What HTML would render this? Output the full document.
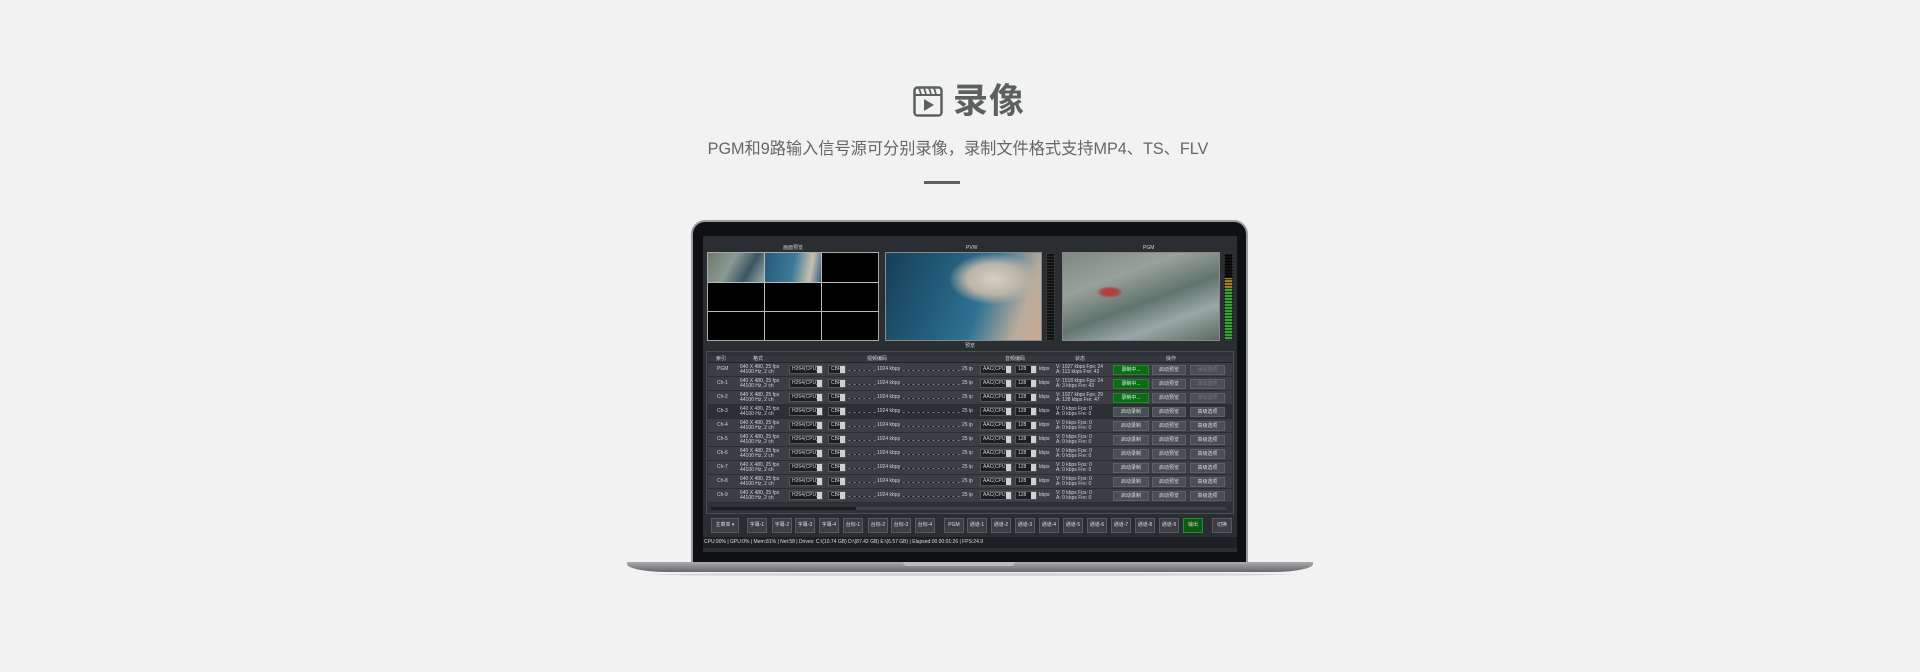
<!DOCTYPE html>
<html><head><meta charset="utf-8">
<style>
*{margin:0;padding:0;box-sizing:border-box}
body{width:1920px;height:672px;background:#f2f2f2;position:relative;overflow:hidden;font-family:"Liberation Sans","Noto Sans CJK SC",sans-serif}
.a{position:absolute}
.t{font-size:5px;color:#cfd3d6;white-space:nowrap;line-height:5px}
.row{position:absolute;left:708px;width:524px;height:14px;background:#3b3f44;border-bottom:1px solid #2a2d31}
.row > *{position:absolute}
.sel{height:9px;top:2px;background:#1c1f22;border:1px solid #555}
.sel i{position:absolute;right:0;top:0;width:5px;height:7px;background:#cfd2d5}
.sld{height:1px;top:7px;background:#1a1a1a;border-top:1px dashed #666}
.btn{top:2px;height:10px;background:#4a4f55;border:1px solid #5c6168;font-size:5px;color:#ddd;text-align:center;line-height:8px}
.g{background:#0e6a14;border-color:#1d8a24;color:#cfe}
.dim{color:#777}
.bb{position:absolute;top:518px;height:15px;width:20px;background:#3b3f44;border:1px solid #565b61;font-size:5px;color:#ddd;text-align:center;line-height:13px}
</style></head><body>

<svg class="a" style="left:913px;top:86px" width="30" height="31" viewBox="0 0 30 31">
<rect x="1.5" y="1.5" width="27" height="28" rx="3" fill="none" stroke="#5b6161" stroke-width="2.5"/>
<line x1="1.5" y1="9" x2="28.5" y2="9" stroke="#5b6161" stroke-width="2"/>
<path d="M6 2L8 8M11 2L13 8M16 2L18 8M21 2L23 8" stroke="#5b6161" stroke-width="1.8"/>
<path d="M11 13L21 19L11 25Z" fill="#5b6161"/>
</svg>
<div class="a" style="left:953px;top:80px;font-size:35px;font-weight:bold;color:#5b6161;line-height:44px;letter-spacing:1px">录像</div>
<div class="a" style="left:658px;top:139px;width:600px;text-align:center;font-size:16.2px;color:#666;line-height:21px;white-space:nowrap">PGM和9路输入信号源可分别录像，录制文件格式支持MP4、TS、FLV</div>
<div class="a" style="left:924px;top:181px;width:36px;height:3px;background:#5b6161"></div>

<div class="a" style="left:691px;top:220px;width:557px;height:344px;background:#0f1012;border-radius:14px 14px 0 0;border:2px solid #9a9ca0;border-bottom:none"></div>
<div class="a" style="left:627px;top:562px;width:686px;height:10px;background:linear-gradient(#a9abae,#808286 60%,#67696c);border-radius:0 0 40px 40px/0 0 8px 8px"></div>
<div class="a" style="left:903px;top:562px;width:112px;height:4px;background:#b9bbbe;border-radius:0 0 4px 4px"></div>
<div class="a" style="left:650px;top:573px;width:640px;height:3px;background:rgba(0,0,0,.12);border-radius:50%"></div>

<div class="a" style="left:703px;top:236px;width:534px;height:316px;background:#2a2d31"></div>
<div class="a t" style="left:783px;top:246px;font-size:5px">画面预览</div>
<div class="a t" style="left:966px;top:246px">PVW</div>
<div class="a t" style="left:1143px;top:246px">PGM</div>

<div class="a" style="left:707px;top:252px;width:172px;height:89px;background:#000;border:1px solid #aaa"></div>
<div class="a" style="left:708px;top:253px;width:56px;height:29px;background:linear-gradient(120deg,#6a7a6a,#8a9a94 40%,#3b5560 70%,#9aa)"></div>
<div class="a" style="left:765px;top:253px;width:56px;height:29px;background:linear-gradient(100deg,#2a5a78,#3b7a96 50%,#c8c0b0 80%,#2d6080)"></div>
<div class="a" style="left:708px;top:282px;width:170px;height:1px;background:#bbb"></div>
<div class="a" style="left:708px;top:311px;width:170px;height:1px;background:#bbb"></div>
<div class="a" style="left:764px;top:253px;width:1px;height:87px;background:#bbb"></div>
<div class="a" style="left:821px;top:253px;width:1px;height:87px;background:#bbb"></div>

<div class="a" style="left:885px;top:252px;width:157px;height:89px;background:radial-gradient(ellipse at 70% 30%,#d8cfc4 0,#b9b3a8 18%,transparent 30%),linear-gradient(110deg,#173f58,#24607e 40%,#2f7293 60%,#b9ac9c 85%,#caa890);border:1px solid #888"></div>
<div class="a" style="left:1046px;top:253px;width:9px;height:88px;background:repeating-linear-gradient(#111 0 2px,#2a2a2a 2px 3px);border:1px solid #333"></div>
<div class="a" style="left:1062px;top:252px;width:158px;height:89px;background:radial-gradient(ellipse at 30% 45%,#c33 0,#a44 5%,transparent 9%),linear-gradient(160deg,#7b8a82,#98a29a 30%,#61746e 55%,#9aa7a8 75%,#5c6a5e);border:1px solid #888"></div>
<div class="a" style="left:1224px;top:253px;width:9px;height:88px;background:linear-gradient(#111 0 28%,#a07d2a 28% 40%,#3aa238 40% 100%);border:1px solid #333"></div>
<div class="a" style="left:1224px;top:253px;width:9px;height:88px;background:repeating-linear-gradient(transparent 0 2px,rgba(0,0,0,.6) 2px 3px)"></div>

<div class="a t" style="left:965px;top:344px">预览</div>

<div class="a" style="left:706px;top:351px;width:528px;height:163px;background:#2e3135;border:1px solid #4a4e53"></div>
<div class="a" style="left:708px;top:356px;width:524px;height:7px;background:#34383c;border-bottom:1px solid #222"></div>
<div class="a t" style="left:716px;top:357px">索引</div>
<div class="a t" style="left:753px;top:357px">格式</div>
<div class="a t" style="left:867px;top:357px">视频编码</div>
<div class="a t" style="left:1005px;top:357px">音频编码</div>
<div class="a t" style="left:1075px;top:357px">状态</div>
<div class="a t" style="left:1166px;top:357px">操作</div>

<div class="row" style="top:363px"><span class="t" style="left:9px;top:4px">PGM</span><span class="t" style="left:32px;top:2px">640 X 480, 25 fps<br>44100 Hz, 2 ch</span><div class="sel" style="left:81px;width:34px"><span class="t" style="position:absolute;left:2px;top:1px">H264(CPU)</span><i></i></div><div class="sel" style="left:120px;width:18px"><span class="t" style="position:absolute;left:2px;top:1px">CBR</span><i></i></div><div class="sld" style="left:140px;width:28px"></div><span class="t" style="left:169px;top:4px">1024 kbps</span><div class="sld" style="left:189px;width:63px"></div><span class="t" style="left:254px;top:4px">25 ip</span><div class="sel" style="left:272px;width:32px"><span class="t" style="position:absolute;left:2px;top:1px">AAC(CPU)</span><i></i></div><div class="sel" style="left:307px;width:22px"><span class="t" style="position:absolute;left:2px;top:1px">128</span><i></i></div><span class="t" style="left:331px;top:4px">kbps</span><span class="t" style="left:348px;top:2px">V: 1027 kbps Fps: 24<br>A: 113 kbps Fre: 43</span><div class="btn g" style="left:405px;width:36px">录制中...</div><div class="btn" style="left:444px;width:34px">启动预览</div><div class="btn dim" style="left:482px;width:35px">添加选项</div></div>

<div class="row" style="top:377px"><span class="t" style="left:9px;top:4px">Ch-1</span><span class="t" style="left:32px;top:2px">640 X 480, 25 fps<br>44100 Hz, 2 ch</span><div class="sel" style="left:81px;width:34px"><span class="t" style="position:absolute;left:2px;top:1px">H264(CPU)</span><i></i></div><div class="sel" style="left:120px;width:18px"><span class="t" style="position:absolute;left:2px;top:1px">CBR</span><i></i></div><div class="sld" style="left:140px;width:28px"></div><span class="t" style="left:169px;top:4px">1024 kbps</span><div class="sld" style="left:189px;width:63px"></div><span class="t" style="left:254px;top:4px">25 ip</span><div class="sel" style="left:272px;width:32px"><span class="t" style="position:absolute;left:2px;top:1px">AAC(CPU)</span><i></i></div><div class="sel" style="left:307px;width:22px"><span class="t" style="position:absolute;left:2px;top:1px">128</span><i></i></div><span class="t" style="left:331px;top:4px">kbps</span><span class="t" style="left:348px;top:2px">V: 1518 kbps Fps: 24<br>A: 3 kbps Fre: 43</span><div class="btn g" style="left:405px;width:36px">录制中...</div><div class="btn" style="left:444px;width:34px">启动预览</div><div class="btn dim" style="left:482px;width:35px">添加选项</div></div>

<div class="row" style="top:391px"><span class="t" style="left:9px;top:4px">Ch-2</span><span class="t" style="left:32px;top:2px">640 X 480, 25 fps<br>44100 Hz, 2 ch</span><div class="sel" style="left:81px;width:34px"><span class="t" style="position:absolute;left:2px;top:1px">H264(CPU)</span><i></i></div><div class="sel" style="left:120px;width:18px"><span class="t" style="position:absolute;left:2px;top:1px">CBR</span><i></i></div><div class="sld" style="left:140px;width:28px"></div><span class="t" style="left:169px;top:4px">1024 kbps</span><div class="sld" style="left:189px;width:63px"></div><span class="t" style="left:254px;top:4px">25 ip</span><div class="sel" style="left:272px;width:32px"><span class="t" style="position:absolute;left:2px;top:1px">AAC(CPU)</span><i></i></div><div class="sel" style="left:307px;width:22px"><span class="t" style="position:absolute;left:2px;top:1px">128</span><i></i></div><span class="t" style="left:331px;top:4px">kbps</span><span class="t" style="left:348px;top:2px">V: 1027 kbps Fps: 29<br>A: 128 kbps Fre: 47</span><div class="btn g" style="left:405px;width:36px">录制中...</div><div class="btn" style="left:444px;width:34px">启动预览</div><div class="btn dim" style="left:482px;width:35px">添加选项</div></div>

<div class="row" style="top:405px;background:#2c2f33"><span class="t" style="left:9px;top:4px">Ch-3</span><span class="t" style="left:32px;top:2px">640 X 480, 25 fps<br>44100 Hz, 2 ch</span><div class="sel" style="left:81px;width:34px"><span class="t" style="position:absolute;left:2px;top:1px">H264(CPU)</span><i></i></div><div class="sel" style="left:120px;width:18px"><span class="t" style="position:absolute;left:2px;top:1px">CBR</span><i></i></div><div class="sld" style="left:140px;width:28px"></div><span class="t" style="left:169px;top:4px">1024 kbps</span><div class="sld" style="left:189px;width:63px"></div><span class="t" style="left:254px;top:4px">25 ip</span><div class="sel" style="left:272px;width:32px"><span class="t" style="position:absolute;left:2px;top:1px">AAC(CPU)</span><i></i></div><div class="sel" style="left:307px;width:22px"><span class="t" style="position:absolute;left:2px;top:1px">128</span><i></i></div><span class="t" style="left:331px;top:4px">kbps</span><span class="t" style="left:348px;top:2px">V: 0 kbps Fps: 0<br>A: 0 kbps Fre: 0</span><div class="btn" style="left:405px;width:36px">启动录制</div><div class="btn" style="left:444px;width:34px">启动预览</div><div class="btn" style="left:482px;width:35px">高级选项</div></div>

<div class="row" style="top:419px"><span class="t" style="left:9px;top:4px">Ch-4</span><span class="t" style="left:32px;top:2px">640 X 480, 25 fps<br>44100 Hz, 2 ch</span><div class="sel" style="left:81px;width:34px"><span class="t" style="position:absolute;left:2px;top:1px">H264(CPU)</span><i></i></div><div class="sel" style="left:120px;width:18px"><span class="t" style="position:absolute;left:2px;top:1px">CBR</span><i></i></div><div class="sld" style="left:140px;width:28px"></div><span class="t" style="left:169px;top:4px">1024 kbps</span><div class="sld" style="left:189px;width:63px"></div><span class="t" style="left:254px;top:4px">25 ip</span><div class="sel" style="left:272px;width:32px"><span class="t" style="position:absolute;left:2px;top:1px">AAC(CPU)</span><i></i></div><div class="sel" style="left:307px;width:22px"><span class="t" style="position:absolute;left:2px;top:1px">128</span><i></i></div><span class="t" style="left:331px;top:4px">kbps</span><span class="t" style="left:348px;top:2px">V: 0 kbps Fps: 0<br>A: 0 kbps Fre: 0</span><div class="btn" style="left:405px;width:36px">启动录制</div><div class="btn" style="left:444px;width:34px">启动预览</div><div class="btn" style="left:482px;width:35px">高级选项</div></div>

<div class="row" style="top:433px"><span class="t" style="left:9px;top:4px">Ch-5</span><span class="t" style="left:32px;top:2px">640 X 480, 25 fps<br>44100 Hz, 2 ch</span><div class="sel" style="left:81px;width:34px"><span class="t" style="position:absolute;left:2px;top:1px">H264(CPU)</span><i></i></div><div class="sel" style="left:120px;width:18px"><span class="t" style="position:absolute;left:2px;top:1px">CBR</span><i></i></div><div class="sld" style="left:140px;width:28px"></div><span class="t" style="left:169px;top:4px">1024 kbps</span><div class="sld" style="left:189px;width:63px"></div><span class="t" style="left:254px;top:4px">25 ip</span><div class="sel" style="left:272px;width:32px"><span class="t" style="position:absolute;left:2px;top:1px">AAC(CPU)</span><i></i></div><div class="sel" style="left:307px;width:22px"><span class="t" style="position:absolute;left:2px;top:1px">128</span><i></i></div><span class="t" style="left:331px;top:4px">kbps</span><span class="t" style="left:348px;top:2px">V: 0 kbps Fps: 0<br>A: 0 kbps Fre: 0</span><div class="btn" style="left:405px;width:36px">启动录制</div><div class="btn" style="left:444px;width:34px">启动预览</div><div class="btn" style="left:482px;width:35px">高级选项</div></div>

<div class="row" style="top:447px"><span class="t" style="left:9px;top:4px">Ch-6</span><span class="t" style="left:32px;top:2px">640 X 480, 25 fps<br>44100 Hz, 2 ch</span><div class="sel" style="left:81px;width:34px"><span class="t" style="position:absolute;left:2px;top:1px">H264(CPU)</span><i></i></div><div class="sel" style="left:120px;width:18px"><span class="t" style="position:absolute;left:2px;top:1px">CBR</span><i></i></div><div class="sld" style="left:140px;width:28px"></div><span class="t" style="left:169px;top:4px">1024 kbps</span><div class="sld" style="left:189px;width:63px"></div><span class="t" style="left:254px;top:4px">25 ip</span><div class="sel" style="left:272px;width:32px"><span class="t" style="position:absolute;left:2px;top:1px">AAC(CPU)</span><i></i></div><div class="sel" style="left:307px;width:22px"><span class="t" style="position:absolute;left:2px;top:1px">128</span><i></i></div><span class="t" style="left:331px;top:4px">kbps</span><span class="t" style="left:348px;top:2px">V: 0 kbps Fps: 0<br>A: 0 kbps Fre: 0</span><div class="btn" style="left:405px;width:36px">启动录制</div><div class="btn" style="left:444px;width:34px">启动预览</div><div class="btn" style="left:482px;width:35px">高级选项</div></div>

<div class="row" style="top:461px"><span class="t" style="left:9px;top:4px">Ch-7</span><span class="t" style="left:32px;top:2px">640 X 480, 25 fps<br>44100 Hz, 2 ch</span><div class="sel" style="left:81px;width:34px"><span class="t" style="position:absolute;left:2px;top:1px">H264(CPU)</span><i></i></div><div class="sel" style="left:120px;width:18px"><span class="t" style="position:absolute;left:2px;top:1px">CBR</span><i></i></div><div class="sld" style="left:140px;width:28px"></div><span class="t" style="left:169px;top:4px">1024 kbps</span><div class="sld" style="left:189px;width:63px"></div><span class="t" style="left:254px;top:4px">25 ip</span><div class="sel" style="left:272px;width:32px"><span class="t" style="position:absolute;left:2px;top:1px">AAC(CPU)</span><i></i></div><div class="sel" style="left:307px;width:22px"><span class="t" style="position:absolute;left:2px;top:1px">128</span><i></i></div><span class="t" style="left:331px;top:4px">kbps</span><span class="t" style="left:348px;top:2px">V: 0 kbps Fps: 0<br>A: 0 kbps Fre: 0</span><div class="btn" style="left:405px;width:36px">启动录制</div><div class="btn" style="left:444px;width:34px">启动预览</div><div class="btn" style="left:482px;width:35px">高级选项</div></div>

<div class="row" style="top:475px"><span class="t" style="left:9px;top:4px">Ch-8</span><span class="t" style="left:32px;top:2px">640 X 480, 25 fps<br>44100 Hz, 2 ch</span><div class="sel" style="left:81px;width:34px"><span class="t" style="position:absolute;left:2px;top:1px">H264(CPU)</span><i></i></div><div class="sel" style="left:120px;width:18px"><span class="t" style="position:absolute;left:2px;top:1px">CBR</span><i></i></div><div class="sld" style="left:140px;width:28px"></div><span class="t" style="left:169px;top:4px">1024 kbps</span><div class="sld" style="left:189px;width:63px"></div><span class="t" style="left:254px;top:4px">25 ip</span><div class="sel" style="left:272px;width:32px"><span class="t" style="position:absolute;left:2px;top:1px">AAC(CPU)</span><i></i></div><div class="sel" style="left:307px;width:22px"><span class="t" style="position:absolute;left:2px;top:1px">128</span><i></i></div><span class="t" style="left:331px;top:4px">kbps</span><span class="t" style="left:348px;top:2px">V: 0 kbps Fps: 0<br>A: 0 kbps Fre: 0</span><div class="btn" style="left:405px;width:36px">启动录制</div><div class="btn" style="left:444px;width:34px">启动预览</div><div class="btn" style="left:482px;width:35px">高级选项</div></div>

<div class="row" style="top:489px"><span class="t" style="left:9px;top:4px">Ch-9</span><span class="t" style="left:32px;top:2px">640 X 480, 25 fps<br>44100 Hz, 2 ch</span><div class="sel" style="left:81px;width:34px"><span class="t" style="position:absolute;left:2px;top:1px">H264(CPU)</span><i></i></div><div class="sel" style="left:120px;width:18px"><span class="t" style="position:absolute;left:2px;top:1px">CBR</span><i></i></div><div class="sld" style="left:140px;width:28px"></div><span class="t" style="left:169px;top:4px">1024 kbps</span><div class="sld" style="left:189px;width:63px"></div><span class="t" style="left:254px;top:4px">25 ip</span><div class="sel" style="left:272px;width:32px"><span class="t" style="position:absolute;left:2px;top:1px">AAC(CPU)</span><i></i></div><div class="sel" style="left:307px;width:22px"><span class="t" style="position:absolute;left:2px;top:1px">128</span><i></i></div><span class="t" style="left:331px;top:4px">kbps</span><span class="t" style="left:348px;top:2px">V: 0 kbps Fps: 0<br>A: 0 kbps Fre: 0</span><div class="btn" style="left:405px;width:36px">启动录制</div><div class="btn" style="left:444px;width:34px">启动预览</div><div class="btn" style="left:482px;width:35px">高级选项</div></div>

<div class="a" style="left:711px;top:507px;width:515px;height:3px;background:#3f4348"></div>
<div class="a" style="left:711px;top:507px;width:145px;height:3px;background:#1a1c1f"></div>

<div class="bb" style="left:711px;width:28px">主菜单 ▾</div>
<div class="bb" style="left:747px">字幕-1</div>
<div class="bb" style="left:772px">字幕-2</div>
<div class="bb" style="left:795px">字幕-3</div>
<div class="bb" style="left:819px">字幕-4</div>
<div class="bb" style="left:843px">台标-1</div>
<div class="bb" style="left:868px">台标-2</div>
<div class="bb" style="left:891px">台标-3</div>
<div class="bb" style="left:915px">台标-4</div>
<div class="bb" style="left:944px">PGM</div>
<div class="bb" style="left:967px">通道-1</div>
<div class="bb" style="left:991px">通道-2</div>
<div class="bb" style="left:1015px">通道-3</div>
<div class="bb" style="left:1039px">通道-4</div>
<div class="bb" style="left:1063px">通道-5</div>
<div class="bb" style="left:1087px">通道-6</div>
<div class="bb" style="left:1111px">通道-7</div>
<div class="bb" style="left:1135px">通道-8</div>
<div class="bb" style="left:1159px">通道-9</div>
<div class="bb" style="left:1183px;background:#0e5a12;border-color:#2a8a2e">输出</div>
<div class="bb" style="left:1212px">切换</div>

<div class="a" style="left:703px;top:537px;width:534px;height:11px;background:#1e2023"></div>
<div class="a t" style="left:704px;top:540px;font-size:5px;color:#ddd">CPU:90% | GPU:0% | Mem:81% | Net:58 | Drives: C:\(10.74 GB) D:\(87.42 GB) E:\(6.57 GB) | Elapsed:00 00:01:26 | FPS:24.9</div>

</body></html>
